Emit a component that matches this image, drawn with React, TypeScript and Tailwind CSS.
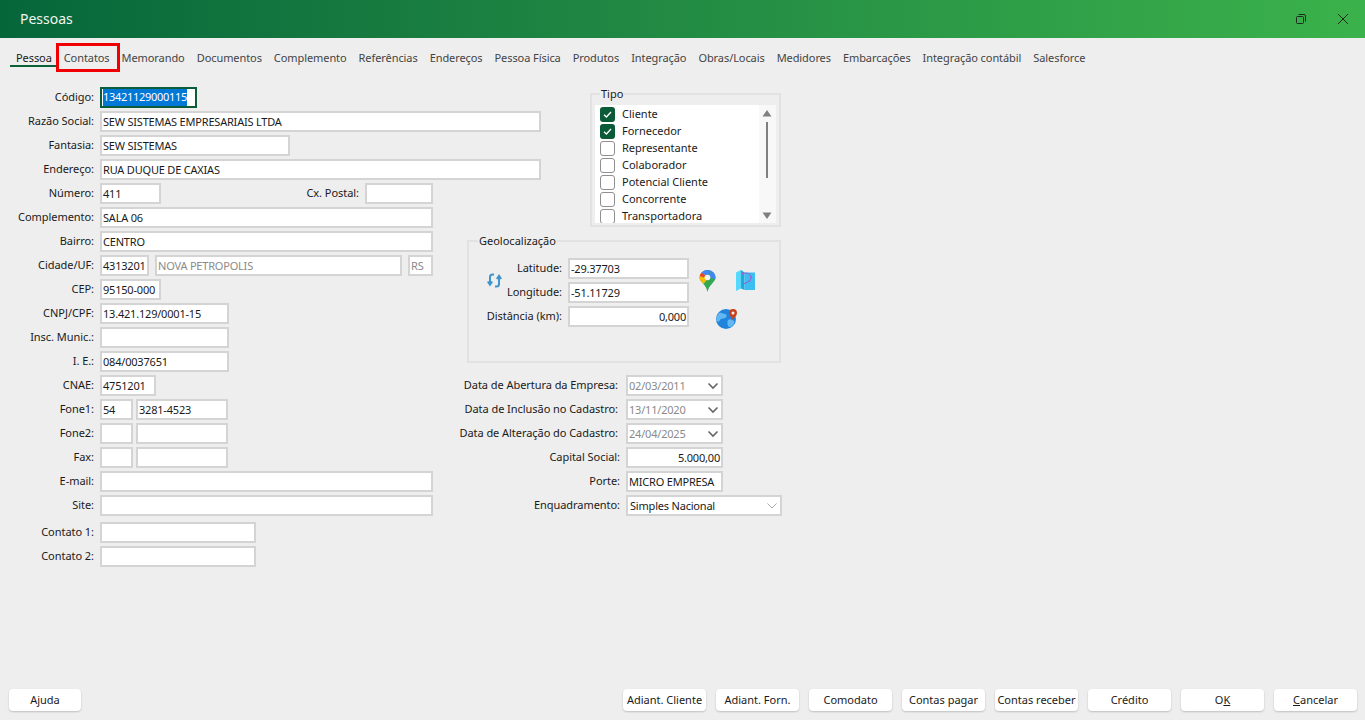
import React from "react";

const F = "font-['Noto_Sans','Open_Sans',sans-serif]";

function Box({ w, v = "", right, muted, chevron, cls = "" }: { w: number; v?: string; right?: boolean; muted?: boolean; chevron?: "dark" | "light"; cls?: string }) {
  return (
    <div
      style={{ width: w }}
      className={`h-[21px] shrink-0 flex items-center border-2 border-[#d4d4d4] bg-white px-[1px] text-[11px] leading-none tracking-[-0.2px] whitespace-nowrap ${right ? "justify-end" : ""} ${muted ? "text-[#8a8a8a]" : "text-[#1a1a1a]"} ${cls}`}
    >
      <span className="-mt-[1px]">{v}</span>
      {chevron && (
        <svg className="ml-auto mr-[1px]" width="12" height="8" viewBox="0 0 12 8" fill="none" stroke={chevron === "dark" ? "#666" : "#aaa"} strokeWidth={chevron === "dark" ? 1.6 : 1}>
          <path d="M1.5 1.5 6 6l4.5-4.5" />
        </svg>
      )}
    </div>
  );
}

function Row({ label, children, lw = 94, cls = "" }: { label: string; children?: React.ReactNode; lw?: number; cls?: string }) {
  return (
    <div className={`flex items-center h-[21px] ${cls}`}>
      <div style={{ width: lw }} className="shrink-0 text-right text-[11px] tracking-[-0.05px] text-[#1a1a1a] whitespace-nowrap">{label}</div>
      <div className="flex items-center ml-[6px]">{children}</div>
    </div>
  );
}

const tabs = ["Pessoa", "Contatos", "Memorando", "Documentos", "Complemento", "Referências", "Endereços", "Pessoa Física", "Produtos", "Integração", "Obras/Locais", "Medidores", "Embarcações", "Integração contábil", "Salesforce"];

const tipos = ["Cliente", "Fornecedor", "Representante", "Colaborador", "Potencial Cliente", "Concorrente", "Transportadora"];

function Btn({ t, w = 83, u }: { t: string; w?: number; u?: "ok" | "c" }) {
  return (
    <button style={{ width: w }} className="h-[22px] rounded-[4px] bg-white shadow-[0_1px_2px_rgba(0,0,0,0.2)] text-[11px] text-[#1a1a1a]">
      {u === "ok" ? <>O<span className="underline">K</span></> : u === "c" ? <><span className="underline">C</span>ancelar</> : t}
    </button>
  );
}

export default function App() {
  return (
    <div className={`${F} w-[1365px] h-[720px] flex flex-col bg-[#eeeeee] overflow-hidden`}>
      <header className="h-[38px] shrink-0 flex items-center bg-gradient-to-r from-[#05663a] to-[#3bb24b] pl-[20px] pr-[16px]">
        <span className="text-[14px] text-[#f1f5ef] -mt-[1px]">Pessoas</span>
        <svg className="ml-auto mr-[30px]" width="12" height="12" viewBox="0 0 12 12" fill="none" stroke="#1c2b1e" strokeWidth="1">
          <rect x="1.500" y="3.500" width="7" height="7" rx="1" />
          <path d="M3.500 1.500h5.500a1.500 1.500 0 0 1 1.500 1.500v5.500" />
        </svg>
        <svg width="12" height="12" viewBox="0 0 12 12" fill="none" stroke="#1c2b1e" strokeWidth="1">
          <path d="M1 1l10 10M11 1 1 11" />
        </svg>
      </header>

      <nav className="h-[49px] shrink-0 flex items-start pl-[10px] pt-[12px]">
        {tabs.map((t, i) => (
          <div key={t} className={`relative h-[17px] px-[6px] text-[11px] leading-[15px] tracking-[-0.08px] whitespace-nowrap ${i === 0 ? "text-[#1a1a1a] border-b-2 border-[#0a6338]" : "text-[#444444]"}`}>
            {t}
            {i === 1 && <div className="absolute left-[-2px] right-[-4px] -top-[7px] h-[29px] border-[3px] border-[#f00000]" />}
          </div>
        ))}
      </nav>

      <main className="flex-1 flex items-start">
        <section className="w-[433px] shrink-0 flex flex-col gap-[3px]">
          <Row label="Código:">
            <div className="h-[21px] w-[97px] border-2 border-[#0a5c3a] bg-white flex items-center px-[1px] text-[11px] tracking-[-0.3px]">
              <span className="bg-[#0078d7] text-white">13421129000115</span>
            </div>
          </Row>
          <Row label="Razão Social:"><Box w={441} v="SEW SISTEMAS EMPRESARIAIS LTDA" /></Row>
          <Row label="Fantasia:"><Box w={190} v="SEW SISTEMAS" /></Row>
          <Row label="Endereço:"><Box w={441} v="RUA DUQUE DE CAXIAS" /></Row>
          <Row label="Número:">
            <Box w={61} v="411" />
            <div className="w-[198px] shrink-0 text-right text-[11px] tracking-[-0.05px] text-[#1a1a1a]">Cx. Postal:</div>
            <Box w={68} cls="ml-[6px]" />
          </Row>
          <Row label="Complemento:"><Box w={333} v="SALA 06" /></Row>
          <Row label="Bairro:"><Box w={333} v="CENTRO" /></Row>
          <Row label="Cidade/UF:">
            <Box w={49} v="4313201" />
            <Box w={247} v="NOVA PETROPOLIS" muted cls="ml-[6px]" />
            <Box w={25} v="RS" muted cls="ml-[6px]" />
          </Row>
          <Row label="CEP:"><Box w={61} v="95150-000" /></Row>
          <Row label="CNPJ/CPF:"><Box w={129} v="13.421.129/0001-15" /></Row>
          <Row label="Insc. Munic.:"><Box w={129} /></Row>
          <Row label="I. E.:"><Box w={129} v="084/0037651" /></Row>
          <Row label="CNAE:"><Box w={56} v="4751201" /></Row>
          <Row label="Fone1:"><Box w={33} v="54" /><Box w={92} v="3281-4523" cls="ml-[3px]" /></Row>
          <Row label="Fone2:"><Box w={33} /><Box w={92} cls="ml-[3px]" /></Row>
          <Row label="Fax:"><Box w={33} /><Box w={92} cls="ml-[3px]" /></Row>
          <Row label="E-mail:"><Box w={333} /></Row>
          <Row label="Site:"><Box w={333} /></Row>
          <Row label="Contato 1:" cls="mt-[3px]"><Box w={156} /></Row>
          <Row label="Contato 2:"><Box w={156} /></Row>
        </section>

        <section className="flex-1 flex flex-col">
          <div className="relative mt-[6px] ml-[157px] w-[191px] h-[134px] border-2 border-[#e2e2e2] p-[3px] pt-[10px]">
            <div className="absolute left-[8px] -top-[8px] bg-[#eeeeee] px-[1px] text-[11px] leading-[13px] text-[#1a1a1a]">Tipo</div>
            <div className="h-[118px] w-[181px] bg-white flex">
              <ul className="flex-1 flex flex-col overflow-hidden pl-[5px] pt-[1px]">
                {tipos.map((t, i) => (
                  <li key={t} className="h-[17px] shrink-0 flex items-center text-[11px] text-[#1a1a1a]">
                    {i < 2 ? (
                      <span className="w-[15px] h-[15px] rounded-[3px] bg-[#0a5c38] flex items-center justify-center">
                        <svg width="11" height="11" viewBox="0 0 11 11" fill="none" stroke="#fff" strokeWidth="1.3"><path d="M2 5.800 4.400 8 9 3" /></svg>
                      </span>
                    ) : (
                      <span className="w-[15px] h-[15px] rounded-[3px] bg-white border-[1.5px] border-[#8f8f8f]" />
                    )}
                    <span className="ml-[7px]">{t}</span>
                  </li>
                ))}
              </ul>
              <div className="w-[17px] shrink-0 relative bg-[#f8f8f8]">
                <svg className="absolute left-[3px] top-[5px]" width="10" height="7" viewBox="0 0 10 7"><path d="M5 0l4.500 6.500H.5z" fill="#7f7f7f" /></svg>
                <div className="absolute left-[7px] top-[17px] w-[2px] h-[56px] bg-[#808080]" />
                <svg className="absolute left-[3px] bottom-[4px]" width="10" height="7" viewBox="0 0 10 7"><path d="M5 7 .5.5h9z" fill="#7f7f7f" /></svg>
              </div>
            </div>
          </div>

          <div className="relative mt-[13px] ml-[34px] w-[314px] h-[123px] border-2 border-[#e2e2e2] pt-[16px] flex">
            <div className="absolute left-[9px] -top-[8px] bg-[#eeeeee] px-[1px] text-[11px] leading-[13px] text-[#1a1a1a]">Geolocalização</div>
            <svg className="absolute left-[18px] top-[31px]" width="15" height="15" viewBox="0 0 15 15" fill="none" stroke="#3d95cb" strokeWidth="2">
              <path d="M7 1.500H5.500Q3 1.500 3 4V11" />
              <path d="M.7 8.500 3 12 5.300 8.500" strokeWidth="1.700" />
              <path d="M8 13.500h1.500q2.500 0 2.500-2.500V3.500" />
              <path d="M9.700 6 12 2.500 14.300 6" strokeWidth="1.700" />
            </svg>
            <div className="w-[221px] shrink-0 flex flex-col gap-[3px]">
              <Row label="Latitude:" lw={93}><Box w={121} v="-29.37703" /></Row>
              <Row label="Longitude:" lw={93}><Box w={121} v="-51.11729" /></Row>
              <Row label="Distância (km):" lw={93}><Box w={121} v="0,000" right /></Row>
            </div>
            <svg className="absolute left-[230px] top-[28px]" width="17" height="22" viewBox="0 0 17 22">
              <path d="M8.500 22C7.600 18 6.200 16.200 4.400 14 2.400 11.600.5 9.800.5 7.800A8 8 0 0 1 8.500 0a8 8 0 0 1 8 7.800c0 2-1.600 3.800-3.700 6.200C10.800 16.300 9.400 18 8.500 22Z" fill="#34a853" />
              <path d="M2.500 2.500A8 8 0 0 0 .5 7.800c0 2 1.900 3.800 3.900 6.200l5.500-6.500-2-3Z" fill="#fbbc04" />
              <path d="M2.500 2.500 6.400 5.200 4.800 7.600.8 6.100c.2-1.400.8-2.600 1.700-3.600Z" fill="#ea4335" />
              <path d="M2.500 2.500A8 8 0 0 1 8.500 0c1.500 0 2.800.4 4 1.100L9 5 6.500 5.200Z" fill="#4285f4" />
              <path d="M12.500 1.100a8 8 0 0 1 4 6.700c0 .6-.1 1.100-.4 1.700L9.800 6.500Z" fill="#4285f4" />
              <circle cx="8.500" cy="7.500" r="2.800" fill="#f4f4f4" />
            </svg>
            <svg className="absolute left-[267px] top-[28px]" width="19" height="21" viewBox="0 0 19 21" fill="none">
              <path d="M0 2.500 5 0v18.500L0 21Z" fill="#55d8fa" />
              <path d="M5 0 8.500 2.500V20L5 18.500Z" fill="#25a6dc" />
              <path d="M8.500 2.500H19V20H8.500Z" fill="#3cbff0" />
              <path d="M6 3.500c4-1 8.500-.5 9 3.500.3 3-2 5-8 7" stroke="#8b5fd6" strokeWidth="1" />
              <circle cx="6" cy="3.500" r="1" fill="#d050d8" /><circle cx="15" cy="7" r="1" fill="#d050d8" /><circle cx="13.500" cy="11" r="1" fill="#d050d8" />
            </svg>
            <svg className="absolute left-[247px] top-[65px]" width="22" height="22" viewBox="0 0 22 22">
              <circle cx="10" cy="12" r="10" fill="#2184dc" />
              <path d="M3 6c3-1 4 1 6 1s2 3 0 4-4 0-5 2-2 2-3.500 1A10 10 0 0 1 3 6Z" fill="#62b8f0" />
              <path d="M12 13c2-1 5 0 6 1s-1 6-4 6-3-5-2-7Z" fill="#62b8f0" />
              <path d="M16.500 12c-1.200-2-3.500-3.600-3.500-6a4 4 0 0 1 8 0c0 2.400-2.300 4-3.500 6l-.5 1Z" fill="#c8401c" />
              <circle cx="17" cy="6" r="1.500" fill="#f3efe8" />
            </svg>
          </div>

          <div className="mt-[12px] ml-[6px] flex flex-col gap-[3px]">
            <Row label="Data de Abertura da Empresa:" lw={179}><Box w={97} v="02/03/2011" muted chevron="dark" cls="ml-[2px]" /></Row>
            <Row label="Data de Inclusão no Cadastro:" lw={179}><Box w={97} v="13/11/2020" muted chevron="dark" cls="ml-[2px]" /></Row>
            <Row label="Data de Alteração do Cadastro:" lw={179}><Box w={97} v="24/04/2025" muted chevron="dark" cls="ml-[2px]" /></Row>
            <Row label="Capital Social:" lw={181}><Box w={97} v="5.000,00" right /></Row>
            <Row label="Porte:" lw={181}><Box w={97} v="MICRO EMPRESA" /></Row>
            <Row label="Enquadramento:" lw={181}><Box w={156} v="Simples Nacional" chevron="light" cls="pl-[2px]" /></Row>
          </div>
        </section>
      </main>

      <footer className="h-[31px] shrink-0 flex items-start pl-[9px] pr-[8px]">
        <Btn t="Ajuda" w={72} />
        <div className="ml-auto flex gap-[10px]">
          {["Adiant. Cliente", "Adiant. Forn.", "Comodato", "Contas pagar", "Contas receber", "Crédito"].map((t) => <Btn key={t} t={t} />)}
          <Btn t="OK" u="ok" />
          <Btn t="Cancelar" u="c" />
        </div>
      </footer>
    </div>
  );
}
